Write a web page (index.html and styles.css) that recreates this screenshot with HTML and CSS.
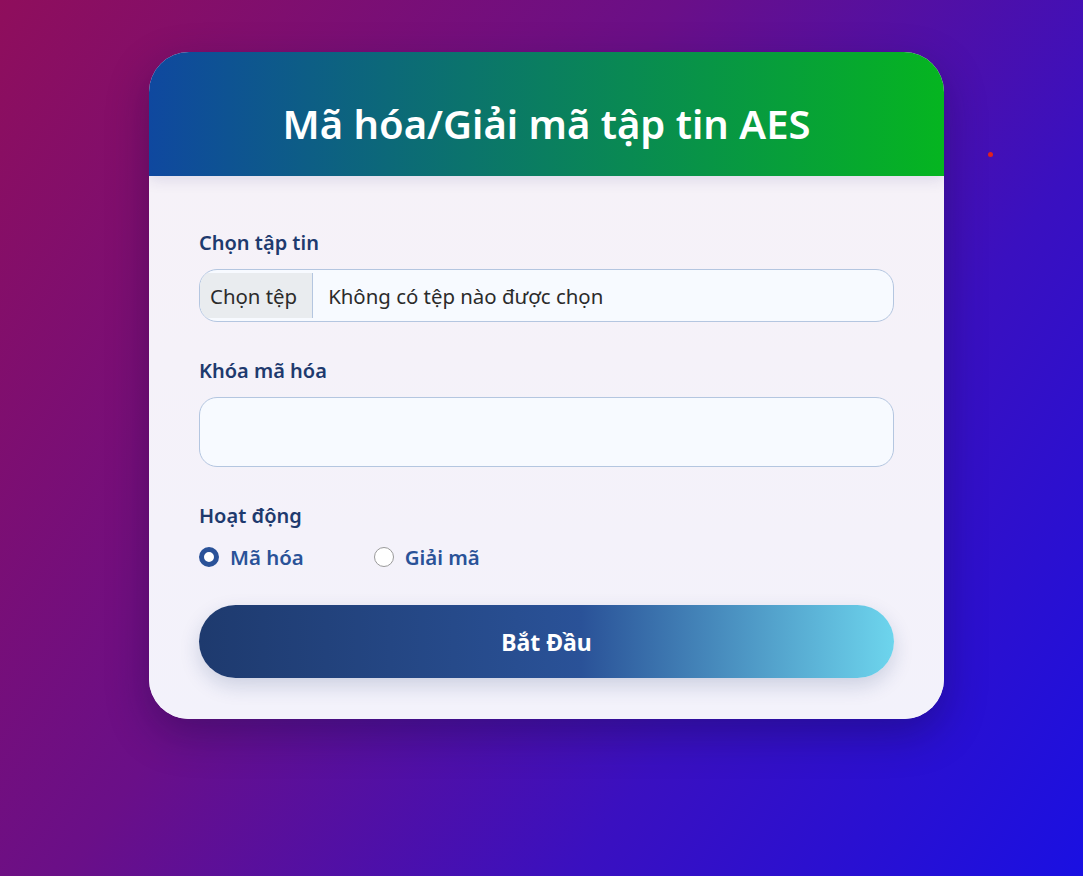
FILE: index.html
```html
<!DOCTYPE html>
<html lang="vi">
<head>
<meta charset="utf-8">
<title>Mã hóa/Giải mã tập tin AES</title>
<link rel="stylesheet" href="styles.css">
</head>
<body>
<span class="dot"></span>
<main class="card">
  <header class="card-header">
    <h1>Mã hóa/Giải mã tập tin AES</h1>
  </header>
  <form class="card-body">
    <div class="group">
      <label class="label">Chọn tập tin</label>
      <div class="file-input">
        <span class="file-btn">Chọn tệp</span>
        <span class="file-name">Không có tệp nào được chọn</span>
      </div>
    </div>
    <div class="group">
      <label class="label">Khóa mã hóa</label>
      <div class="text-input"></div>
    </div>
    <div class="group group-radio">
      <label class="label">Hoạt động</label>
      <div class="radios">
        <label class="radio"><span class="circle checked"></span>Mã hóa</label>
        <label class="radio"><span class="circle"></span>Giải mã</label>
      </div>
    </div>
    <div class="submit">Bắt Đầu</div>
  </form>
</main>
</body>
</html>
```

FILE: styles.css
```css
* { box-sizing: border-box; }
html, body { height: 100%; }
body {
  margin: 0;
  min-height: 876px;
  font-family: "Noto Sans", "Open Sans", sans-serif;
  background: linear-gradient(125deg, #8f0e5c 0%, #6a0f88 40%, #3a10c0 70%, #1a10e2 100%);
  display: flex;
  justify-content: center;
  align-items: flex-start;
  padding: 52px 0 0 10px;
  position: relative;
}
.dot {
  position: absolute;
  left: 988px;
  top: 152px;
  width: 5px;
  height: 5px;
  border-radius: 50%;
  background: #e0201e;
}
.card {
  width: 795px;
  background: #f5f2f9;
  border-radius: 40px;
  overflow: hidden;
  box-shadow: 0 15px 40px rgba(20, 10, 60, 0.35);
}
.card-header {
  height: 124px;
  padding-top: 18px;
  background: linear-gradient(to right, #0f489f, #05b520);
  display: flex;
  align-items: center;
  justify-content: center;
  box-shadow: 0 4px 14px rgba(40, 40, 120, 0.12);
  position: relative;
}
.card-header h1 {
  margin: 0;
  color: #fff;
  font-size: 40px;
  font-weight: 600;
  letter-spacing: 0;
}
.card-body {
  padding: 52px 50px 41px;
  background: linear-gradient(#f6f2f8, #f3f2fb);
  display: flex;
  flex-direction: column;
}
.group {
  display: flex;
  flex-direction: column;
  margin-bottom: 34px;
}
.label {
  color: #1e3a6e;
  font-size: 20px;
  font-weight: 600;
  line-height: 30px;
  margin-bottom: 11px;
}
.file-input {
  height: 53px;
  border: 1px solid #b4c6e0;
  border-radius: 18px;
  background: #f7faff;
  display: flex;
  align-items: stretch;
  overflow: hidden;
  padding: 3px 0;
}
.file-btn {
  background: #e9ecef;
  color: #2b2b2b;
  font-size: 20.4px;
  display: flex;
  align-items: center;
  padding: 0 15px 0 10px;
  border-right: 1px solid #b4c6e0;
}
.file-name {
  color: #2b2b2b;
  font-size: 20.4px;
  display: flex;
  align-items: center;
  padding-left: 15px;
}
.text-input {
  height: 70px;
  border: 1px solid #b4c6e0;
  border-radius: 18px;
  background: #f7faff;
}
.radios {
  display: flex;
  gap: 70px;
}
.group-radio { margin-bottom: 33px; }
.group-radio .label { margin-bottom: 11px; }
.radio {
  display: flex;
  align-items: center;
  gap: 11px;
  color: #2a5298;
  font-size: 20.4px;
  font-weight: 600;
  line-height: 30px;
}
.circle {
  width: 20px;
  height: 20px;
  border-radius: 50%;
  border: 1px solid #9a9a9a;
  background: #fff;
}
.circle.checked {
  border: 5.5px solid #2a5298;
  background: #fff;
}
.submit {
  height: 73px;
  border-radius: 37px;
  background: linear-gradient(to right, #1e3a6e 0%, #2a5298 55%, #6dd5ed 100%);
  color: #fff;
  font-size: 23px;
  font-weight: 700;
  display: flex;
  align-items: center;
  justify-content: center;
  box-shadow: 0 8px 20px rgba(30, 58, 110, 0.18);
}
```
